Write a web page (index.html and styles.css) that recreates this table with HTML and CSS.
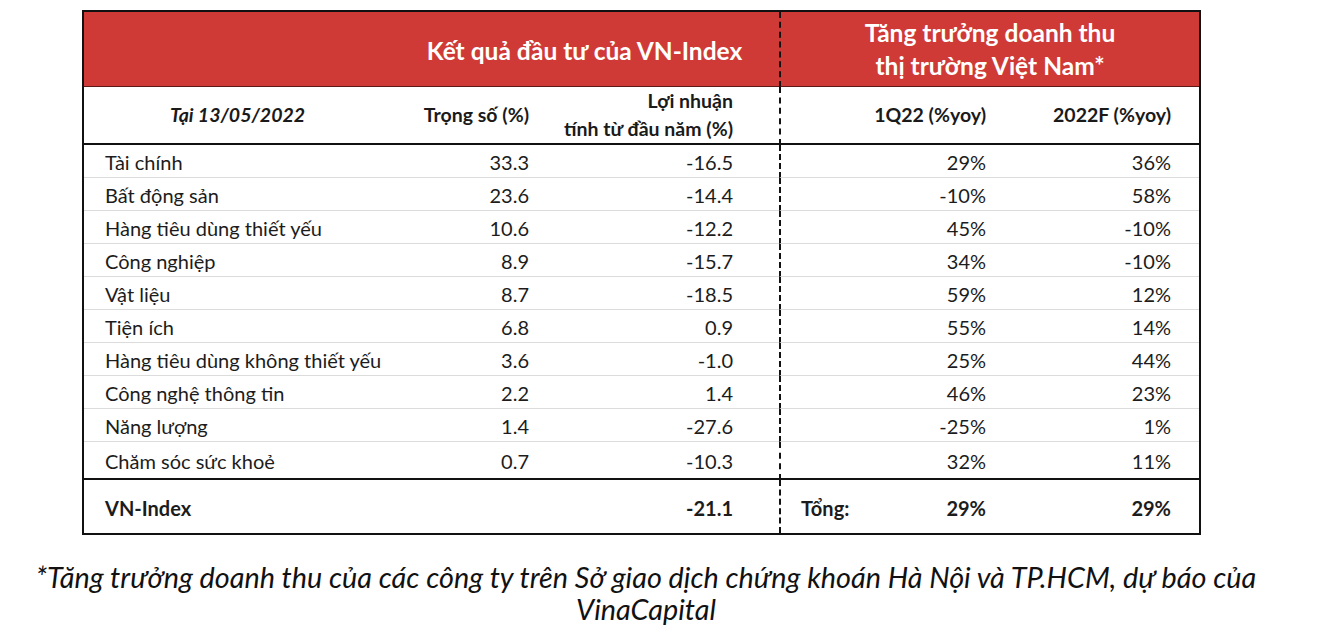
FILE: index.html
```html
<!DOCTYPE html>
<html lang="vi">
<head>
<meta charset="utf-8">
<title>Kết quả đầu tư của VN-Index</title>
<link rel="stylesheet" href="styles.css">
</head>
<body>
<div class="page">
  <table class="perf">
    <colgroup>
      <col class="c1"><col class="c2"><col class="c3"><col class="c4"><col class="c5">
    </colgroup>
    <thead>
      <tr class="band">
        <th class="c-first"></th>
        <th colspan="2" class="band-left">Kết quả đầu tư của VN-Index</th>
        <th colspan="2" class="band-right div">Tăng trưởng doanh thu<br>thị trường Việt Nam*</th>
      </tr>
      <tr class="sub">
        <th class="label date">Tại 13/05/2022</th>
        <th class="num n2">Trọng số (%)</th>
        <th class="num n3">Lợi nhuận<br>tính từ đầu năm (%)</th>
        <th class="num n4 div">1Q22 (%yoy)</th>
        <th class="num n5">2022F (%yoy)</th>
      </tr>
    </thead>
    <tbody>
      <tr><td class="label">Tài chính</td><td class="num n2">33.3</td><td class="num n3">-16.5</td><td class="num n4 div">29%</td><td class="num n5">36%</td></tr>
      <tr><td class="label">Bất động sản</td><td class="num n2">23.6</td><td class="num n3">-14.4</td><td class="num n4 div">-10%</td><td class="num n5">58%</td></tr>
      <tr><td class="label">Hàng tiêu dùng thiết yếu</td><td class="num n2">10.6</td><td class="num n3">-12.2</td><td class="num n4 div">45%</td><td class="num n5">-10%</td></tr>
      <tr><td class="label">Công nghiệp</td><td class="num n2">8.9</td><td class="num n3">-15.7</td><td class="num n4 div">34%</td><td class="num n5">-10%</td></tr>
      <tr><td class="label">Vật liệu</td><td class="num n2">8.7</td><td class="num n3">-18.5</td><td class="num n4 div">59%</td><td class="num n5">12%</td></tr>
      <tr><td class="label">Tiện ích</td><td class="num n2">6.8</td><td class="num n3">0.9</td><td class="num n4 div">55%</td><td class="num n5">14%</td></tr>
      <tr><td class="label">Hàng tiêu dùng không thiết yếu</td><td class="num n2">3.6</td><td class="num n3">-1.0</td><td class="num n4 div">25%</td><td class="num n5">44%</td></tr>
      <tr><td class="label">Công nghệ thông tin</td><td class="num n2">2.2</td><td class="num n3">1.4</td><td class="num n4 div">46%</td><td class="num n5">23%</td></tr>
      <tr><td class="label">Năng lượng</td><td class="num n2">1.4</td><td class="num n3">-27.6</td><td class="num n4 div">-25%</td><td class="num n5">1%</td></tr>
      <tr class="last"><td class="label">Chăm sóc sức khoẻ</td><td class="num n2">0.7</td><td class="num n3">-10.3</td><td class="num n4 div">32%</td><td class="num n5">11%</td></tr>
    </tbody>
    <tfoot>
      <tr class="total">
        <td class="label">VN-Index</td>
        <td class="num n2"></td>
        <td class="num n3">-21.1</td>
        <td class="num n4 div"><span class="tong">Tổng:</span>29%</td>
        <td class="num n5">29%</td>
      </tr>
    </tfoot>
  </table>
  <p class="note">*Tăng trưởng doanh thu của các công ty trên Sở giao dịch chứng khoán Hà Nội và TP.HCM, dự báo của VinaCapital</p>
</div>
</body>
</html>
```

FILE: styles.css
```css
html, body {
  margin: 0;
  padding: 0;
  background: #ffffff;
}

body {
  font-family: Lato, "Open Sans", "Liberation Sans", sans-serif;
  color: #1c1c1c;
}

.page {
  padding: 10px 0 0 82px;
}

.perf {
  width: 1119px;
  table-layout: fixed;
  border-collapse: separate;
  border-spacing: 0;
  border: 2px solid #111;
  font-size: 20px;
}

.c1 { width: 316px; }
.c2 { width: 145px; }
.c3 { width: 234px; }
.c4 { width: 221px; }
.c5 { width: 199px; }

.perf th, .perf td {
  padding: 0;
  vertical-align: middle;
}

.div {
  border-left: 2px dashed #111;
}

/* top red band */
.band th {
  background: #cf3a36;
  color: #ffffff;
  font-weight: 700;
  font-size: 24.5px;
  line-height: 33px;
  height: 72px;
  border-bottom: 1px solid #5a1a18;
}
.band .band-left {
  text-align: center;
  padding-right: 10px;
  padding-top: 2px;
}
.band .band-right {
  text-align: center;
}

/* sub header */
.sub th {
  height: 56px;
  font-weight: 700;
  font-size: 19.5px;
  line-height: 28px;
  color: #1a1a1a;
  border-bottom: 2px solid #111;
}
.sub .date {
  font-style: italic;
  text-align: center;
  padding-left: 0 !important;
  padding-right: 9px;
}

.label {
  text-align: left;
  padding-left: 21px !important;
}
.num { text-align: right; }
.n2 { padding-right: 16px !important; }
.n3 { padding-right: 46px !important; }
.n4 { padding-right: 14px !important; }
.n5 { padding-right: 28px !important; }

tbody td {
  height: 30px;
  padding-top: 2px !important;
  line-height: 22px;
  border-bottom: 1px solid #dcdcdc;
}
tbody tr.last td {
  height: 34px;
  border-bottom: 2px solid #111;
}

.total td {
  height: 50px;
  padding-top: 3px !important;
  font-weight: 700;
}
.total .n4 {
  padding-left: 20px !important;
}
.tong {
  float: left;
}

.note {
  margin: 26px 0 0 -56px;
  width: 1240px;
  text-align: center;
  font-style: italic;
  font-size: 28.8px;
  line-height: 32px;
  color: #111;
}
```
